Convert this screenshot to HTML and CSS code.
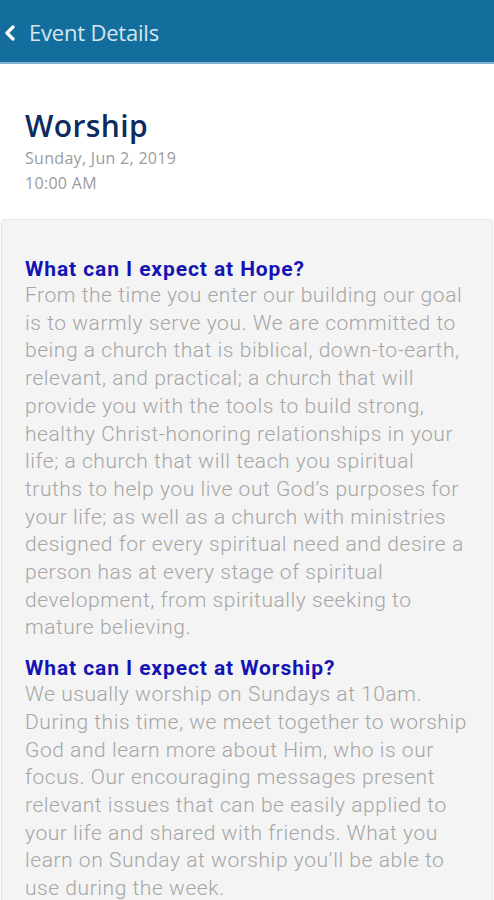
FILE: index.html
```html
<!DOCTYPE html>
<html>
<head>
<meta charset="utf-8">
<link rel="stylesheet" href="styles.css">
</head>
<body>
<header class="topbar">
  <svg class="back" width="12" height="16" viewBox="0 0 12 16"><path d="M9 2 L3 8 L9 14" fill="none" stroke="#ffffff" stroke-width="3.2" stroke-linecap="round" stroke-linejoin="round"/></svg>
  <span class="topbar-title">Event Details</span>
</header>
<section class="event-head">
  <h1 class="event-title">Worship</h1>
  <div class="event-meta">Sunday, Jun 2, 2019</div>
  <div class="event-meta">10:00 AM</div>
</section>
<section class="card">
  <h2 class="q">What can I expect at Hope?</h2>
  <p class="a">From the time you enter our building our goal is to warmly serve you. We are committed to being a church that is biblical, down-to-earth, relevant, and practical; a church that will provide you with the tools to build strong, healthy Christ-honoring relationships in your life; a church that will teach you spiritual truths to help you live out God’s purposes for your life; as well as a church with ministries designed for every spiritual need and desire a person has at every stage of spiritual development, from spiritually seeking to mature believing.</p>
  <h2 class="q">What can I expect at Worship?</h2>
  <p class="a">We usually worship on Sundays at 10am. During this time, we meet together to worship God and learn more about Him, who is our focus. Our encouraging messages present relevant issues that can be easily applied to your life and shared with friends. What you learn on Sunday at worship you’ll be able to use during the week.</p>
</section>
</body>
</html>
```
FILE: styles.css
```css
html, body {
  margin: 0;
  padding: 0;
  background: #ffffff;
  overflow: hidden;
}
body {
  width: 494px;
  height: 900px;
}
.topbar {
  height: 64px;
  background: #136e9e;
  border-bottom: 2px solid #7fb3cf;
  box-sizing: border-box;
  display: flex;
  align-items: center;
  padding-left: 4px;
  gap: 13px;
}
.back {
  display: block;
  margin-top: 4px;
}
.topbar-title {
  font-family: "Open Sans", sans-serif;
  color: #d6e5ee;
  font-size: 22px;
  letter-spacing: -0.2px;
  margin-top: 2px;
}
.event-head {
  padding: 42px 25px 0 25px;
  height: 155px;
  box-sizing: border-box;
}
.event-title {
  font-family: "Open Sans", sans-serif;
  font-weight: 600;
  color: #0d2b5c;
  font-size: 30px;
  line-height: 40px;
  margin: 0;
  letter-spacing: 0.4px;
}
.event-meta {
  font-family: "Open Sans", sans-serif;
  color: #9c9c9c;
  font-size: 16px;
  line-height: 25px;
  letter-spacing: 0.3px;
}
.card {
  margin: 0 1px;
  background: #f4f4f4;
  border: 1px solid #e6e6e6;
  border-radius: 4px;
  box-shadow: 0 1px 2px rgba(0,0,0,0.08);
  padding: 36px 22px 0 23px;
  height: 700px;
  box-sizing: border-box;
}
.q {
  font-family: Roboto, sans-serif;
  font-weight: 700;
  color: #1414b4;
  font-size: 21px;
  line-height: 26px;
  letter-spacing: 0.9px;
  margin: 0;
}
.a {
  font-family: Roboto, sans-serif;
  font-weight: 300;
  color: #a6a6a6;
  font-size: 21px;
  line-height: 27.7px;
  letter-spacing: 0.55px;
  margin: 0 0 13px 0;
}
```
